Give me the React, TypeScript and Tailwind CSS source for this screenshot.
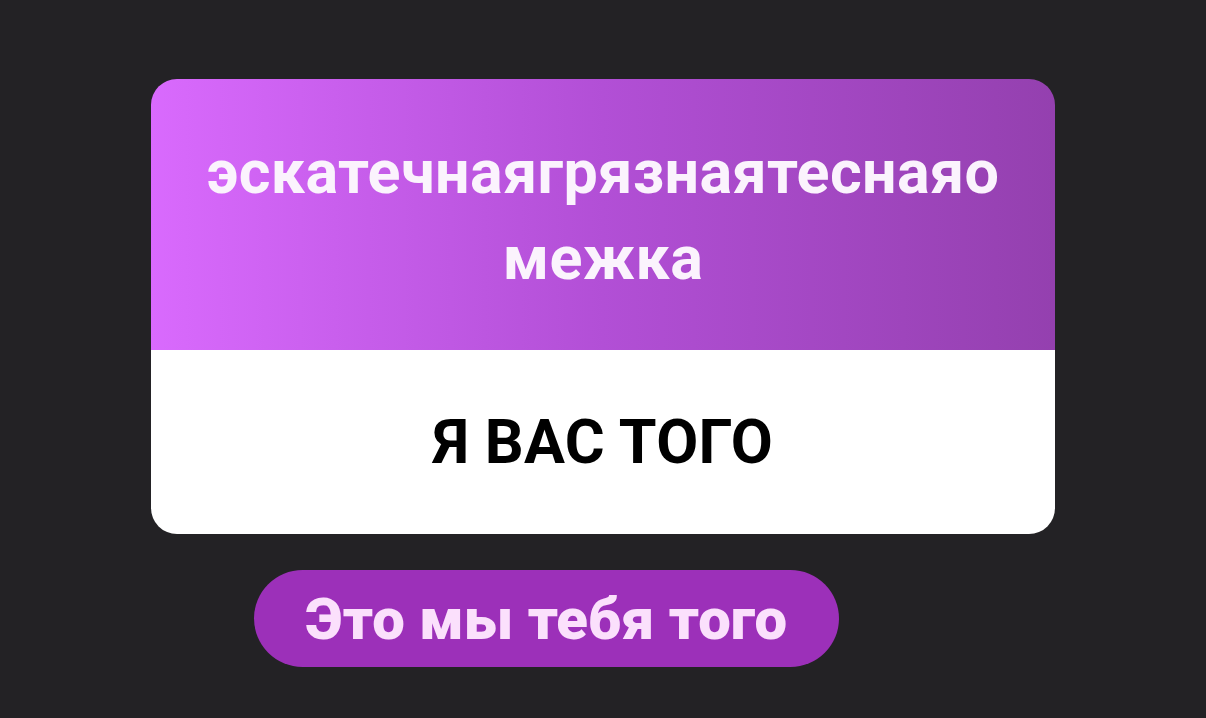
export default function App() {
  return (
    <div
      className="w-[1206px] h-[718px] bg-[#232225] pt-[79px] pl-[151px] flex flex-col items-start"
      style={{ fontFamily: 'Roboto, "Noto Sans", sans-serif' }}
    >
      <div className="w-[904px] rounded-[26px] overflow-hidden flex flex-col">
        <div className="h-[271px] flex items-center justify-center px-8 bg-gradient-to-r from-[#d96afd] via-[#b24fd6] to-[#9440af]">
          <p className="text-[#fbf3fd] font-bold text-[61px] leading-[86px] tracking-[0.4px] text-center break-all">
            эскатечнаягрязнаятеснаяо
            <br />
            межка
          </p>
        </div>
        <div className="h-[184px] bg-white flex items-center justify-center">
          <span className="text-black font-bold text-[61px] leading-none tracking-[0.3px]">Я ВАС ТОГО</span>
        </div>
      </div>
      <button className="mt-[36px] ml-[103px] w-[585px] h-[97px] rounded-full bg-[#9c30b9] flex items-center justify-center">
        <span className="text-[#fbe0fc] font-black text-[58px] leading-none">Это мы тебя того</span>
      </button>
    </div>
  );
}
